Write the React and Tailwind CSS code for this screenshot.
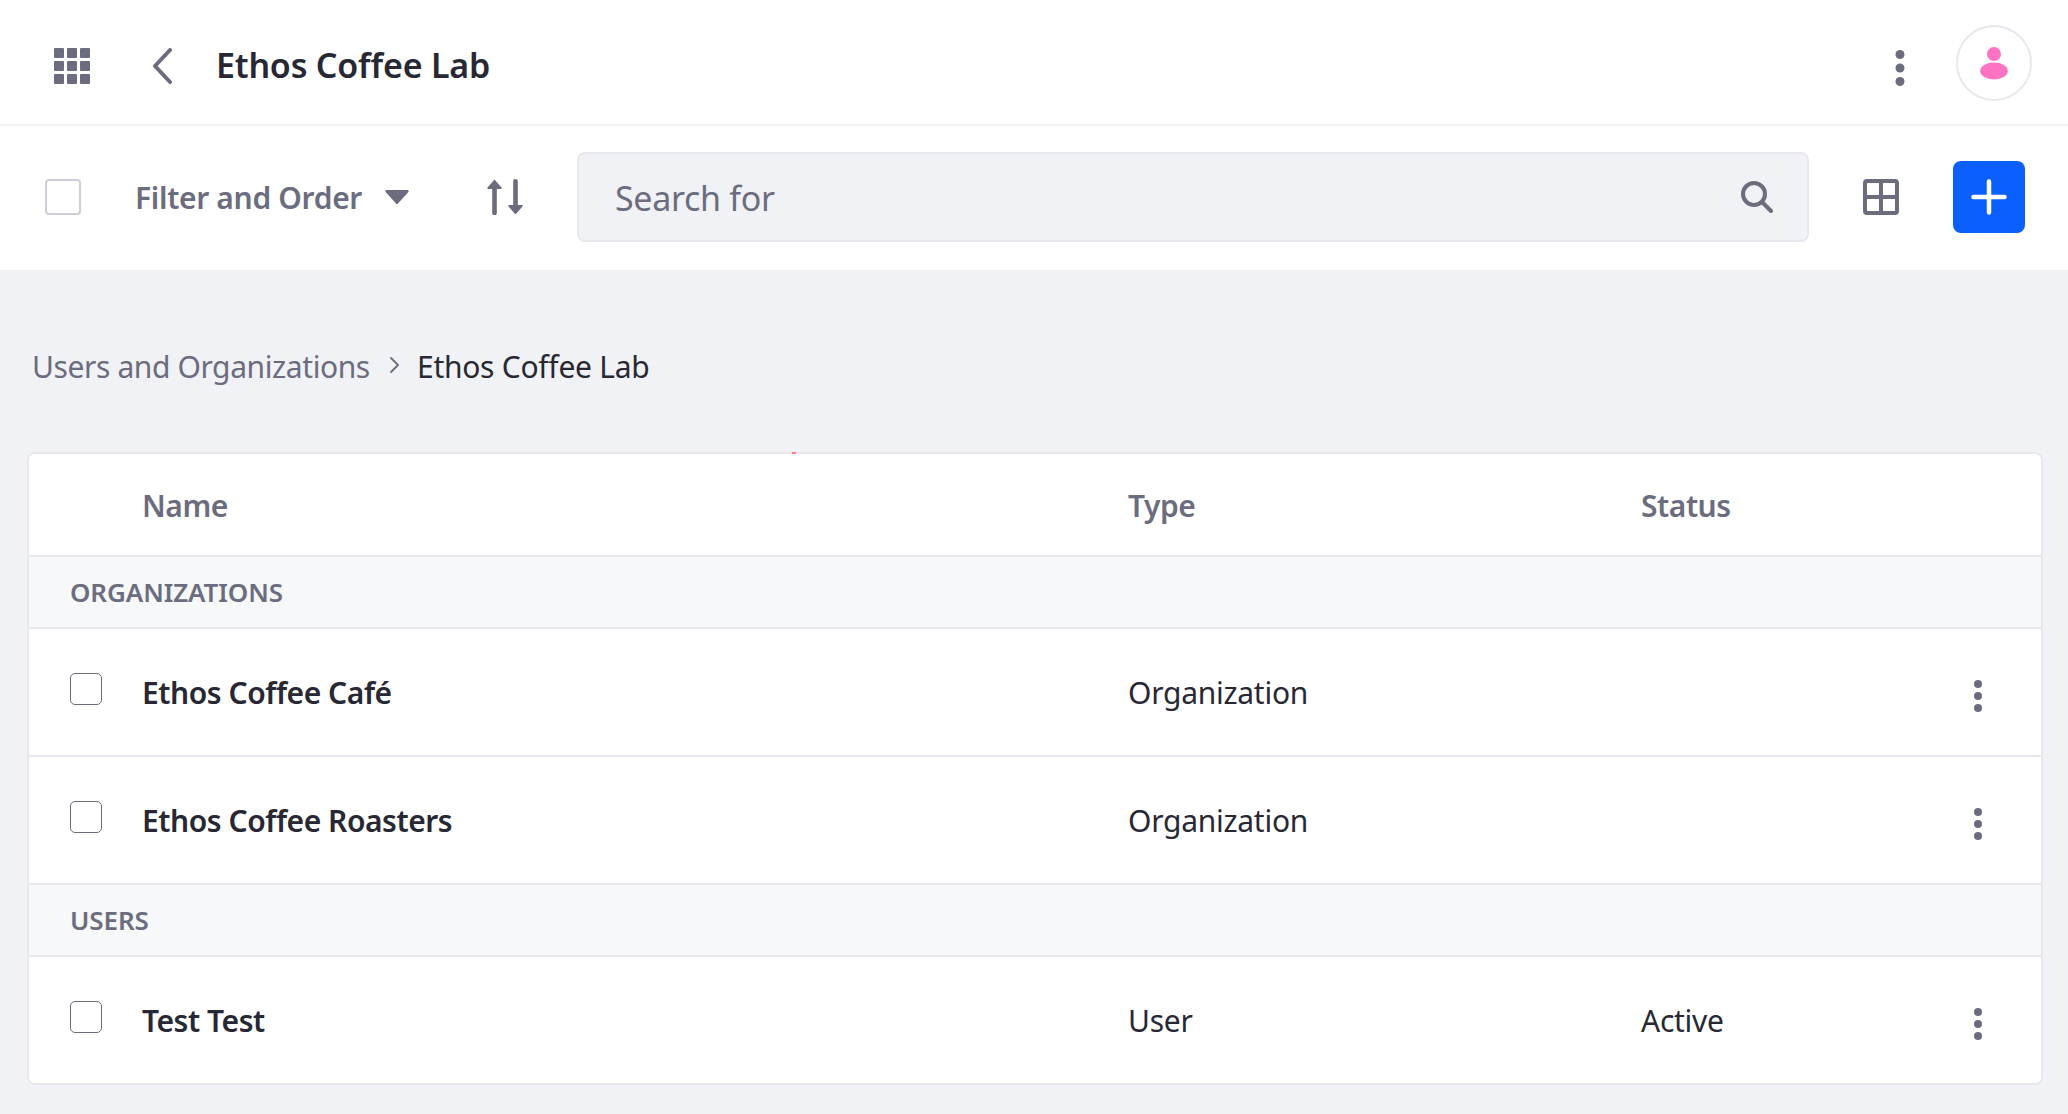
import React from 'react';

// three dots used in the header and on every row
const Dots = ({ r = 3.75, gap = 12, className = '' }) => (
  <svg width="16" height={gap * 2 + r * 2 + 2} viewBox={`0 0 16 ${gap * 2 + r * 2 + 2}`} className={`fill-[#6b6c7e] ${className}`}>
    <circle cx="8" cy={r + 1} r={r} />
    <circle cx="8" cy={r + 1 + gap} r={r} />
    <circle cx="8" cy={r + 1 + gap * 2} r={r} />
  </svg>
);

const AppsIcon = () => (
  <svg width="36" height="36" viewBox="0 0 36 36" className="fill-[#6b6c7e]">
    {[0, 13, 26].map((y) =>
      [0, 13, 26].map((x) => <rect key={`${x}-${y}`} x={x} y={y} width="10" height="10" rx="1" />)
    )}
  </svg>
);

const SortIcon = () => (
  <svg width="36" height="36" viewBox="0 0 36 36" className="fill-[#6b6c7e]">
    <path d="M7.5.5l7 8c.5.6.1 1.5-.7 1.5h-4v24a2.3 2.3 0 0 1-4.6 0V10h-4c-.8 0-1.2-.9-.7-1.5z" />
    <path d="M28.5 35.5l-7-8c-.5-.6-.1-1.5.7-1.5h4V2.3a2.3 2.3 0 0 1 4.6 0V26h4c.8 0 1.2.9.7 1.5z" />
  </svg>
);

const TableIcon = () => (
  <svg width="36" height="36" viewBox="0 0 36 36" fill="none" className="stroke-[#6b6c7e]" strokeWidth="4">
    <rect x="2" y="2" width="32" height="32" rx="2" />
    <path d="M18 2v32M2 18h32" />
  </svg>
);

const Checkbox = () => (
  <span className="block w-[32px] h-[32px] rounded-[5px] border border-[#6b6c7e] bg-white" />
);

const Row = ({ name, type, status }) => (
  <div className="grid grid-cols-[113px_986px_513px_1fr] items-center h-[126px] bg-white">
    <div className="pl-[41px] -mt-[6px]">
      <Checkbox />
    </div>
    <div className="font-semibold tracking-[-0.45px] text-[#272833]">{name}</div>
    <div className="text-[#272833]">{type}</div>
    <div className="flex items-center justify-between pr-[55px]">
      <span className="text-[#272833]">{status}</span>
      <Dots className="mt-[8px]" r={4} gap={12} />
    </div>
  </div>
);

const GroupRow = ({ label }) => (
  <div className="flex items-center h-[70px] pl-[41px] bg-[#f7f8f9] border-y-2 border-[#e7e7ed] box-content text-[26px] tracking-[-0.1px] font-semibold text-[#6b6c7e] uppercase">
    {label}
  </div>
);

export default function App() {
  return (
    <div className="min-h-screen bg-[#f1f2f5] font-['Noto_Sans',sans-serif] text-[30px] tracking-[-0.27px]">
      {/* top bar */}
      <header className="flex items-center h-[126px] bg-white border-b-2 border-[#f1f2f5]">
        <div className="ml-[54px] mt-[8px]">
          <AppsIcon />
        </div>
        <svg width="24" height="36" viewBox="0 0 24 36" fill="none" className="ml-[60px] mt-[8px] stroke-[#6b6c7e]" strokeWidth="4" strokeLinecap="round" strokeLinejoin="round">
          <path d="M20 2 5 18l15 16" />
        </svg>
        <h1 className="ml-[42px] mt-[6px] text-[34px] tracking-[-0.2px] font-semibold text-[#272833]">Ethos Coffee Lab</h1>
        <div className="ml-auto flex items-center">
          <Dots r={4.5} gap={13.5} className="mt-[12px]" />
          <div className="flex items-center justify-center w-[76px] h-[76px] ml-[48px] mr-[36px] mt-[2px] rounded-full border-2 border-[#e7e7ed]">
            <svg width="30" height="40" viewBox="0 0 30 40" className="mt-[4px] fill-[#ff73c3]">
              <circle cx="15" cy="9" r="7" />
              <ellipse cx="15" cy="26" rx="13.8" ry="8.4" />
            </svg>
          </div>
        </div>
      </header>

      {/* toolbar */}
      <div className="flex items-center h-[144px] pb-[2px] bg-white">
        <span className="block ml-[45px] w-[36px] h-[36px] rounded-[4px] border-2 border-[#cdced9] bg-white" />
        <span className="ml-[54px] w-[228px] font-semibold tracking-[-0.33px] whitespace-nowrap text-[#6b6c7e]">Filter and Order</span>
        <svg width="24" height="14" viewBox="0 0 24 14" className="ml-[22px] fill-[#6b6c7e]">
          <path d="M1.5 0h21a1.2 1.2 0 0 1 .9 2L13 13.4a1.3 1.3 0 0 1-2 0L.6 2a1.2 1.2 0 0 1 .9-2z" />
        </svg>
        <div className="ml-[78px]">
          <SortIcon />
        </div>
        <div className="flex items-center ml-[54px] w-[1232px] h-[90px] pl-[36px] pr-[34px] rounded-[8px] bg-[#f1f2f5] border-2 border-[#e7e7ed]">
          <span className="flex-1 mt-[2px] text-[34px] tracking-[-0.3px] text-[#6b6c7e]">Search for</span>
          <svg width="32" height="32" viewBox="0 0 32 32" fill="none" className="stroke-[#6b6c7e]" strokeWidth="4" strokeLinecap="round">
            <circle cx="13" cy="13" r="11" />
            <path d="m21.5 21.5 8.5 8.5" />
          </svg>
        </div>
        <div className="ml-[54px]">
          <TableIcon />
        </div>
        <button className="flex items-center justify-center ml-[54px] w-[72px] h-[72px] rounded-[8px] bg-[#0b5fff]">
          <svg width="36" height="36" viewBox="0 0 36 36" fill="none" className="stroke-white" strokeWidth="4.5" strokeLinecap="round">
            <path d="M18 2.5v31M2.5 18h31" />
          </svg>
        </button>
      </div>

      {/* breadcrumb */}
      <nav className="flex items-center h-[60px] mt-[66px] pl-[32px]">
        <span className="w-[337px] whitespace-nowrap tracking-[-0.4px] text-[#6b6c7e]">Users and Organizations</span>
        <svg width="12" height="18" viewBox="0 0 12 18" fill="none" className="ml-[20px] -mt-[2px] stroke-[#6b6c7e]" strokeWidth="1.8" strokeLinecap="round" strokeLinejoin="round">
          <path d="m2 2 7 7-7 7" />
        </svg>
        <span className="ml-[16px] text-[#272833]">Ethos Coffee Lab</span>
      </nav>

      {/* table card */}
      <div className="relative mt-[56px] ml-[27px] w-[2016px]">
        <span className="absolute top-0 left-[765px] w-[4px] h-[2px] bg-[#ff7a85]" />
        <section className="rounded-[8px] border-2 border-[#e7e7ed] bg-white overflow-hidden">
          <div className="grid grid-cols-[113px_986px_513px_1fr] items-center h-[101px] pt-[2px] bg-white font-semibold tracking-[-0.45px] text-[#6b6c7e]">
            <span />
            <span>Name</span>
            <span>Type</span>
            <span>Status</span>
          </div>
          <GroupRow label="Organizations" />
          <Row name="Ethos Coffee Café" type="Organization" />
          <div className="h-[2px] bg-[#e7e7ed]" />
          <Row name="Ethos Coffee Roasters" type="Organization" />
          <GroupRow label="Users" />
          <Row name="Test Test" type="User" status="Active" />
        </section>
      </div>
    </div>
  );
}
